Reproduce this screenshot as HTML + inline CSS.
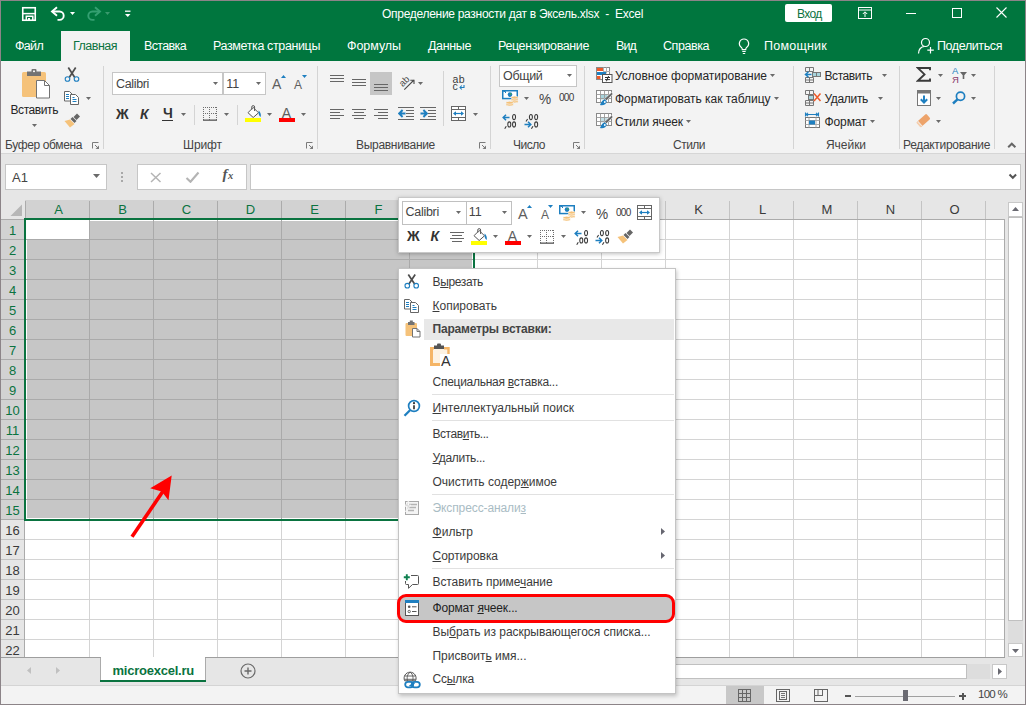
<!DOCTYPE html><html><head><meta charset="utf-8"><title>Excel</title><style>
html,body{margin:0;padding:0;}
body{width:1026px;height:705px;overflow:hidden;position:relative;background:#fff;font-family:"Liberation Sans",sans-serif;}
.b{position:absolute;display:block;}
.t{position:absolute;white-space:nowrap;line-height:1;}
u{text-decoration:underline;text-underline-offset:1px;text-decoration-thickness:1px;}
</style></head><body>
<div class="b" style="left:0px;top:0px;width:1026px;height:61px;background:#00763e;"></div>
<div class="b" style="left:0px;top:61px;width:1026px;height:92px;background:#f3f3f3;"></div>
<div class="b" style="left:0px;top:153px;width:1026px;height:1px;background:#d6d6d6;"></div>
<div class="b" style="left:0px;top:154px;width:1026px;height:46px;background:#e6e6e6;"></div>
<div class="b" style="left:0px;top:200px;width:1026px;height:460px;background:#e6e6e6;"></div>
<div class="b" style="left:0px;top:0px;width:1026px;height:1px;background:#8c8488;"></div>
<div class="b" style="left:0px;top:0px;width:1px;height:705px;background:#8c8488;"></div>
<div class="b" style="left:1025px;top:0px;width:1px;height:705px;background:#8c8488;"></div>
<div class="b" style="left:0px;top:704px;width:1026px;height:1px;background:#8c8488;"></div>
<span class="t" id="t0" style="left:382px;top:8.00px;font-size:12px;color:#fff;letter-spacing:-0.290px;">Определение разности дат в Эксель.xlsx&nbsp; -&nbsp; Excel</span>
<svg class="b" style="left:21px;top:6px" width="16" height="16" viewBox="0 0 16 16"><rect x="1.750" y="1.750" width="12.500" height="12.500" fill="none" stroke="#fff" stroke-width="1.600"/><path d="M2 7.600h12" stroke="#fff" stroke-width="1.500"/><path d="M5.300 14V10.300h6.500V14" fill="none" stroke="#fff" stroke-width="1.500"/><rect x="7" y="12" width="2" height="2.500" fill="#fff"/></svg>
<svg class="b" style="left:50px;top:6px" width="17" height="15" viewBox="0 0 17 15"><path d="M7 1.200L2 5.500l5 4.300" fill="none" stroke="#fff" stroke-width="1.900"/><path d="M2.500 5.500h7a4.200 4.200 0 0 1 0 8.400H7.500" fill="none" stroke="#fff" stroke-width="1.900"/></svg>
<svg class="b" style="left:70.0px;top:12.0px" width="5" height="3" viewBox="0 0 5 3"><path d="M0 0H5L2.5 3Z" fill="#fff"/></svg>
<svg class="b" style="left:85px;top:6px" width="17" height="15" viewBox="0 0 17 15"><path d="M10 1.200l5 4.300-5 4.300" fill="none" stroke="#35a072" stroke-width="1.900"/><path d="M14.500 5.500h-7a4.200 4.200 0 0 0 0 8.400H9.500" fill="none" stroke="#35a072" stroke-width="1.900"/></svg>
<svg class="b" style="left:105.0px;top:12.0px" width="5" height="3" viewBox="0 0 5 3"><path d="M0 0H5L2.5 3Z" fill="#3a9a6e"/></svg>
<svg class="b" style="left:125px;top:10px" width="6" height="8" viewBox="0 0 6 8"><path d="M0 1.200h5.500" stroke="#fff" stroke-width="1.300"/><path d="M0 4h5.500L2.750 7z" fill="#fff"/></svg>
<div class="b" style="left:785px;top:4px;width:47px;height:18px;background:#fff;border-radius:2px;"></div>
<span class="t" id="t1" style="left:797px;top:8.00px;font-size:12px;color:#0a7340;letter-spacing:-0.664px;">Вход</span>
<svg class="b" style="left:858px;top:7px" width="15" height="13" viewBox="0 0 15 13"><rect x="0.5" y="0.5" width="13" height="11" fill="none" stroke="#fff" stroke-width="1"/><path d="M0.5 3h13" stroke="#fff"/><path d="M7 10V5M4.8 7L7 4.8 9.2 7" fill="none" stroke="#fff" stroke-width="1"/></svg>
<div class="b" style="left:906px;top:13px;width:10px;height:1px;background:#fff;"></div>
<div class="b" style="left:952px;top:8px;width:10px;height:10px;background:transparent;border:1px solid #fff;box-sizing:border-box;"></div>
<svg class="b" style="left:996px;top:7px" width="12" height="12" viewBox="0 0 12 12"><path d="M0.5 0.5l10 10M10.5 0.5l-10 10" stroke="#fff" stroke-width="1.1"/></svg>
<div class="b" style="left:61px;top:31px;width:69px;height:30px;background:#f3f3f3;"></div>
<span class="t" id="t2" style="left:15px;top:39.75px;font-size:12.5px;color:#fff;letter-spacing:-0.684px;">Файл</span>
<span class="t" id="t3" style="left:73px;top:39.75px;font-size:12.5px;color:#0a7340;letter-spacing:-0.511px;">Главная</span>
<span class="t" id="t4" style="left:144px;top:39.75px;font-size:12.5px;color:#fff;letter-spacing:-0.638px;">Вставка</span>
<span class="t" id="t5" style="left:213px;top:39.75px;font-size:12.5px;color:#fff;letter-spacing:-0.377px;">Разметка страницы</span>
<span class="t" id="t6" style="left:347px;top:39.75px;font-size:12.5px;color:#fff;letter-spacing:-0.058px;">Формулы</span>
<span class="t" id="t7" style="left:428px;top:39.75px;font-size:12.5px;color:#fff;letter-spacing:-0.362px;">Данные</span>
<span class="t" id="t8" style="left:498px;top:39.75px;font-size:12.5px;color:#fff;letter-spacing:-0.395px;">Рецензирование</span>
<span class="t" id="t9" style="left:616px;top:39.75px;font-size:12.5px;color:#fff;letter-spacing:-0.875px;">Вид</span>
<span class="t" id="t10" style="left:663px;top:39.75px;font-size:12.5px;color:#fff;letter-spacing:-0.435px;">Справка</span>
<span class="t" id="t11" style="left:764px;top:39.75px;font-size:12.5px;color:#fff;letter-spacing:0.234px;">Помощник</span>
<span class="t" id="t12" style="left:937px;top:39.75px;font-size:12.5px;color:#fff;letter-spacing:-0.403px;">Поделиться</span>
<svg class="b" style="left:738px;top:38px" width="12" height="17" viewBox="0 0 12 17"><path d="M6 1a4.6 4.6 0 0 0-2.6 8.4c.6.6.9 1.3.9 2.3h3.4c0-1 .3-1.700.9-2.300A4.600 4.600 0 0 0 6 1z" fill="none" stroke="#fff" stroke-width="1.2"/><path d="M4.300 13.500h3.400M4.800 15.500h2.400" stroke="#fff" stroke-width="1.100"/></svg>
<svg class="b" style="left:917px;top:37px" width="18" height="18" viewBox="0 0 18 18"><circle cx="8.500" cy="5.500" r="4" fill="none" stroke="#fff" stroke-width="1.200"/><path d="M1.500 16.500c0-4 2.500-7 6-7" fill="none" stroke="#fff" stroke-width="1.200"/><path d="M13.500 10v6.500M10.300 13.200h6.500" stroke="#fff" stroke-width="1.200"/></svg>
<div class="b" style="left:103px;top:66px;width:1px;height:83px;background:#d4d4d4;"></div>
<div class="b" style="left:317px;top:66px;width:1px;height:83px;background:#d4d4d4;"></div>
<div class="b" style="left:490px;top:66px;width:1px;height:83px;background:#d4d4d4;"></div>
<div class="b" style="left:584px;top:66px;width:1px;height:83px;background:#d4d4d4;"></div>
<div class="b" style="left:793px;top:66px;width:1px;height:83px;background:#d4d4d4;"></div>
<div class="b" style="left:899px;top:66px;width:1px;height:83px;background:#d4d4d4;"></div>
<div class="b" style="left:994px;top:66px;width:1px;height:83px;background:#d4d4d4;"></div>
<span class="t" id="t13" style="left:5px;top:139.00px;font-size:12px;color:#444;letter-spacing:-0.379px;">Буфер обмена</span>
<span class="t" id="t14" style="left:183px;top:139.00px;font-size:12px;color:#444;letter-spacing:-0.097px;">Шрифт</span>
<span class="t" id="t15" style="left:356px;top:139.00px;font-size:12px;color:#444;letter-spacing:-0.301px;">Выравнивание</span>
<span class="t" id="t16" style="left:513px;top:139.00px;font-size:12px;color:#444;letter-spacing:-0.503px;">Число</span>
<span class="t" id="t17" style="left:673px;top:139.00px;font-size:12px;color:#444;letter-spacing:-0.516px;">Стили</span>
<span class="t" id="t18" style="left:826px;top:139.00px;font-size:12px;color:#444;letter-spacing:-0.042px;">Ячейки</span>
<span class="t" id="t19" style="left:903px;top:139.00px;font-size:12px;color:#444;letter-spacing:-0.316px;">Редактирование</span>
<div class="b" style="left:5px;top:164px;width:102px;height:26px;background:#fff;border:1px solid #c6c6c6;box-sizing:border-box;"></div>
<span class="t" id="t20" style="left:12px;top:171.00px;font-size:13px;color:#444;letter-spacing:0.047px;">A1</span>
<svg class="b" style="left:93.0px;top:174.0px" width="7" height="4" viewBox="0 0 7 4"><path d="M0 0H7L3.5 4Z" fill="#6a6a6a"/></svg>
<div class="b" style="left:121px;top:172px;width:2px;height:2px;background:#a8a8a8;"></div>
<div class="b" style="left:121px;top:176px;width:2px;height:2px;background:#a8a8a8;"></div>
<div class="b" style="left:121px;top:180px;width:2px;height:2px;background:#a8a8a8;"></div>
<div class="b" style="left:137px;top:164px;width:110px;height:26px;background:#fff;border:1px solid #c6c6c6;box-sizing:border-box;"></div>
<svg class="b" style="left:150px;top:172px" width="12" height="11" viewBox="0 0 12 11"><path d="M1 1l9.500 9M10.500 1L1 10" stroke="#b4b4b4" stroke-width="1.500"/></svg>
<svg class="b" style="left:185px;top:171px" width="15" height="12" viewBox="0 0 15 12"><path d="M1.500 7l4 3.800L13.500 1.500" fill="none" stroke="#b4b4b4" stroke-width="2.100"/></svg>
<span class="t" id="t21" style="left:222.5px;top:167.00px;font-size:15px;color:#555;font-style:italic;font-family:'Liberation Serif',serif;font-weight:bold;">f</span>
<span class="t" id="t22" style="left:228px;top:170.75px;font-size:10.5px;color:#555;font-style:italic;font-family:'Liberation Serif',serif;font-weight:bold;">x</span>
<div class="b" style="left:250px;top:164px;width:771px;height:26px;background:#fff;border:1px solid #c6c6c6;box-sizing:border-box;"></div>
<svg class="b" style="left:1008px;top:173px" width="10" height="7" viewBox="0 0 10 7"><path d="M1.500 1.500l3.300 3.300L8.100 1.500" fill="none" stroke="#555" stroke-width="2"/></svg>
<div class="b" style="left:25px;top:219px;width:980px;height:438px;background:#fff;"></div>
<div class="b" style="left:26px;top:220px;width:447px;height:299px;background:#fff;"></div>
<div class="b" style="left:27px;top:221px;width:445px;height:297px;background:#c6c6c6;"></div>
<div class="b" style="left:26px;top:220px;width:63px;height:19px;background:#fff;"></div>
<div class="b" style="left:89px;top:219px;width:1px;height:300px;background:#aaaaaa;"></div>
<div class="b" style="left:89px;top:519px;width:1px;height:138px;background:#d4d4d4;"></div>
<div class="b" style="left:153px;top:219px;width:1px;height:300px;background:#aaaaaa;"></div>
<div class="b" style="left:153px;top:519px;width:1px;height:138px;background:#d4d4d4;"></div>
<div class="b" style="left:217px;top:219px;width:1px;height:300px;background:#aaaaaa;"></div>
<div class="b" style="left:217px;top:519px;width:1px;height:138px;background:#d4d4d4;"></div>
<div class="b" style="left:281px;top:219px;width:1px;height:300px;background:#aaaaaa;"></div>
<div class="b" style="left:281px;top:519px;width:1px;height:138px;background:#d4d4d4;"></div>
<div class="b" style="left:345px;top:219px;width:1px;height:300px;background:#aaaaaa;"></div>
<div class="b" style="left:345px;top:519px;width:1px;height:138px;background:#d4d4d4;"></div>
<div class="b" style="left:409px;top:219px;width:1px;height:300px;background:#aaaaaa;"></div>
<div class="b" style="left:409px;top:519px;width:1px;height:138px;background:#d4d4d4;"></div>
<div class="b" style="left:473px;top:219px;width:1px;height:438px;background:#d4d4d4;"></div>
<div class="b" style="left:537px;top:219px;width:1px;height:438px;background:#d4d4d4;"></div>
<div class="b" style="left:601px;top:219px;width:1px;height:438px;background:#d4d4d4;"></div>
<div class="b" style="left:665px;top:219px;width:1px;height:438px;background:#d4d4d4;"></div>
<div class="b" style="left:729px;top:219px;width:1px;height:438px;background:#d4d4d4;"></div>
<div class="b" style="left:793px;top:219px;width:1px;height:438px;background:#d4d4d4;"></div>
<div class="b" style="left:857px;top:219px;width:1px;height:438px;background:#d4d4d4;"></div>
<div class="b" style="left:921px;top:219px;width:1px;height:438px;background:#d4d4d4;"></div>
<div class="b" style="left:985px;top:219px;width:1px;height:438px;background:#d4d4d4;"></div>
<div class="b" style="left:25px;top:239px;width:448px;height:1px;background:#aaaaaa;"></div>
<div class="b" style="left:473px;top:239px;width:532px;height:1px;background:#d4d4d4;"></div>
<div class="b" style="left:25px;top:259px;width:448px;height:1px;background:#aaaaaa;"></div>
<div class="b" style="left:473px;top:259px;width:532px;height:1px;background:#d4d4d4;"></div>
<div class="b" style="left:25px;top:279px;width:448px;height:1px;background:#aaaaaa;"></div>
<div class="b" style="left:473px;top:279px;width:532px;height:1px;background:#d4d4d4;"></div>
<div class="b" style="left:25px;top:299px;width:448px;height:1px;background:#aaaaaa;"></div>
<div class="b" style="left:473px;top:299px;width:532px;height:1px;background:#d4d4d4;"></div>
<div class="b" style="left:25px;top:319px;width:448px;height:1px;background:#aaaaaa;"></div>
<div class="b" style="left:473px;top:319px;width:532px;height:1px;background:#d4d4d4;"></div>
<div class="b" style="left:25px;top:339px;width:448px;height:1px;background:#aaaaaa;"></div>
<div class="b" style="left:473px;top:339px;width:532px;height:1px;background:#d4d4d4;"></div>
<div class="b" style="left:25px;top:359px;width:448px;height:1px;background:#aaaaaa;"></div>
<div class="b" style="left:473px;top:359px;width:532px;height:1px;background:#d4d4d4;"></div>
<div class="b" style="left:25px;top:379px;width:448px;height:1px;background:#aaaaaa;"></div>
<div class="b" style="left:473px;top:379px;width:532px;height:1px;background:#d4d4d4;"></div>
<div class="b" style="left:25px;top:399px;width:448px;height:1px;background:#aaaaaa;"></div>
<div class="b" style="left:473px;top:399px;width:532px;height:1px;background:#d4d4d4;"></div>
<div class="b" style="left:25px;top:419px;width:448px;height:1px;background:#aaaaaa;"></div>
<div class="b" style="left:473px;top:419px;width:532px;height:1px;background:#d4d4d4;"></div>
<div class="b" style="left:25px;top:439px;width:448px;height:1px;background:#aaaaaa;"></div>
<div class="b" style="left:473px;top:439px;width:532px;height:1px;background:#d4d4d4;"></div>
<div class="b" style="left:25px;top:459px;width:448px;height:1px;background:#aaaaaa;"></div>
<div class="b" style="left:473px;top:459px;width:532px;height:1px;background:#d4d4d4;"></div>
<div class="b" style="left:25px;top:479px;width:448px;height:1px;background:#aaaaaa;"></div>
<div class="b" style="left:473px;top:479px;width:532px;height:1px;background:#d4d4d4;"></div>
<div class="b" style="left:25px;top:499px;width:448px;height:1px;background:#aaaaaa;"></div>
<div class="b" style="left:473px;top:499px;width:532px;height:1px;background:#d4d4d4;"></div>
<div class="b" style="left:25px;top:519px;width:980px;height:1px;background:#d4d4d4;"></div>
<div class="b" style="left:25px;top:539px;width:980px;height:1px;background:#d4d4d4;"></div>
<div class="b" style="left:25px;top:559px;width:980px;height:1px;background:#d4d4d4;"></div>
<div class="b" style="left:25px;top:579px;width:980px;height:1px;background:#d4d4d4;"></div>
<div class="b" style="left:25px;top:599px;width:980px;height:1px;background:#d4d4d4;"></div>
<div class="b" style="left:25px;top:619px;width:980px;height:1px;background:#d4d4d4;"></div>
<div class="b" style="left:25px;top:639px;width:980px;height:1px;background:#d4d4d4;"></div>
<div class="b" style="left:1px;top:200px;width:1004px;height:19px;background:#e6e6e6;"></div>
<div class="b" style="left:25px;top:200px;width:448px;height:18px;background:#d2d2d2;"></div>
<div class="b" style="left:1px;top:219px;width:24px;height:438px;background:#e6e6e6;"></div>
<div class="b" style="left:1px;top:219px;width:24px;height:300px;background:#d2d2d2;"></div>
<span class="t" id="t23" style="left:53.5px;top:203.00px;font-size:13px;color:#0a7340;width:10px;text-align:center;">A</span>
<div class="b" style="left:89px;top:201px;width:1px;height:18px;background:#ababab;"></div>
<span class="t" id="t24" style="left:117.5px;top:203.00px;font-size:13px;color:#0a7340;width:10px;text-align:center;">B</span>
<div class="b" style="left:153px;top:201px;width:1px;height:18px;background:#ababab;"></div>
<span class="t" id="t25" style="left:181.5px;top:203.00px;font-size:13px;color:#0a7340;width:10px;text-align:center;">C</span>
<div class="b" style="left:217px;top:201px;width:1px;height:18px;background:#ababab;"></div>
<span class="t" id="t26" style="left:245.5px;top:203.00px;font-size:13px;color:#0a7340;width:10px;text-align:center;">D</span>
<div class="b" style="left:281px;top:201px;width:1px;height:18px;background:#ababab;"></div>
<span class="t" id="t27" style="left:309.5px;top:203.00px;font-size:13px;color:#0a7340;width:10px;text-align:center;">E</span>
<div class="b" style="left:345px;top:201px;width:1px;height:18px;background:#ababab;"></div>
<span class="t" id="t28" style="left:373.5px;top:203.00px;font-size:13px;color:#0a7340;width:10px;text-align:center;">F</span>
<div class="b" style="left:409px;top:201px;width:1px;height:18px;background:#ababab;"></div>
<span class="t" id="t29" style="left:437.5px;top:203.00px;font-size:13px;color:#0a7340;width:10px;text-align:center;">G</span>
<div class="b" style="left:473px;top:201px;width:1px;height:18px;background:#ababab;"></div>
<span class="t" id="t30" style="left:501.5px;top:203.00px;font-size:13px;color:#3a3a3a;width:10px;text-align:center;">H</span>
<div class="b" style="left:537px;top:201px;width:1px;height:18px;background:#c3c3c3;"></div>
<span class="t" id="t31" style="left:565.5px;top:203.00px;font-size:13px;color:#3a3a3a;width:10px;text-align:center;">I</span>
<div class="b" style="left:601px;top:201px;width:1px;height:18px;background:#c3c3c3;"></div>
<span class="t" id="t32" style="left:629.5px;top:203.00px;font-size:13px;color:#3a3a3a;width:10px;text-align:center;">J</span>
<div class="b" style="left:665px;top:201px;width:1px;height:18px;background:#c3c3c3;"></div>
<span class="t" id="t33" style="left:693.5px;top:203.00px;font-size:13px;color:#3a3a3a;width:10px;text-align:center;">K</span>
<div class="b" style="left:729px;top:201px;width:1px;height:18px;background:#c3c3c3;"></div>
<span class="t" id="t34" style="left:757.5px;top:203.00px;font-size:13px;color:#3a3a3a;width:10px;text-align:center;">L</span>
<div class="b" style="left:793px;top:201px;width:1px;height:18px;background:#c3c3c3;"></div>
<span class="t" id="t35" style="left:821.5px;top:203.00px;font-size:13px;color:#3a3a3a;width:10px;text-align:center;">M</span>
<div class="b" style="left:857px;top:201px;width:1px;height:18px;background:#c3c3c3;"></div>
<span class="t" id="t36" style="left:885.5px;top:203.00px;font-size:13px;color:#3a3a3a;width:10px;text-align:center;">N</span>
<div class="b" style="left:921px;top:201px;width:1px;height:18px;background:#c3c3c3;"></div>
<span class="t" id="t37" style="left:949.5px;top:203.00px;font-size:13px;color:#3a3a3a;width:10px;text-align:center;">O</span>
<div class="b" style="left:985px;top:201px;width:1px;height:18px;background:#c3c3c3;"></div>
<div class="b" style="left:25px;top:201px;width:1px;height:18px;background:#ababab;"></div>
<div class="b" style="left:1px;top:219px;width:1004px;height:1px;background:#ababab;"></div>
<span class="t" id="t38" style="left:3.5px;top:224.00px;font-size:13px;color:#0a7340;width:18px;text-align:center;">1</span>
<div class="b" style="left:1px;top:239px;width:24px;height:1px;background:#ababab;"></div>
<span class="t" id="t39" style="left:3.5px;top:244.00px;font-size:13px;color:#0a7340;width:18px;text-align:center;">2</span>
<div class="b" style="left:1px;top:259px;width:24px;height:1px;background:#ababab;"></div>
<span class="t" id="t40" style="left:3.5px;top:264.00px;font-size:13px;color:#0a7340;width:18px;text-align:center;">3</span>
<div class="b" style="left:1px;top:279px;width:24px;height:1px;background:#ababab;"></div>
<span class="t" id="t41" style="left:3.5px;top:284.00px;font-size:13px;color:#0a7340;width:18px;text-align:center;">4</span>
<div class="b" style="left:1px;top:299px;width:24px;height:1px;background:#ababab;"></div>
<span class="t" id="t42" style="left:3.5px;top:304.00px;font-size:13px;color:#0a7340;width:18px;text-align:center;">5</span>
<div class="b" style="left:1px;top:319px;width:24px;height:1px;background:#ababab;"></div>
<span class="t" id="t43" style="left:3.5px;top:324.00px;font-size:13px;color:#0a7340;width:18px;text-align:center;">6</span>
<div class="b" style="left:1px;top:339px;width:24px;height:1px;background:#ababab;"></div>
<span class="t" id="t44" style="left:3.5px;top:344.00px;font-size:13px;color:#0a7340;width:18px;text-align:center;">7</span>
<div class="b" style="left:1px;top:359px;width:24px;height:1px;background:#ababab;"></div>
<span class="t" id="t45" style="left:3.5px;top:364.00px;font-size:13px;color:#0a7340;width:18px;text-align:center;">8</span>
<div class="b" style="left:1px;top:379px;width:24px;height:1px;background:#ababab;"></div>
<span class="t" id="t46" style="left:3.5px;top:384.00px;font-size:13px;color:#0a7340;width:18px;text-align:center;">9</span>
<div class="b" style="left:1px;top:399px;width:24px;height:1px;background:#ababab;"></div>
<span class="t" id="t47" style="left:3.5px;top:404.00px;font-size:13px;color:#0a7340;width:18px;text-align:center;">10</span>
<div class="b" style="left:1px;top:419px;width:24px;height:1px;background:#ababab;"></div>
<span class="t" id="t48" style="left:3.5px;top:424.00px;font-size:13px;color:#0a7340;width:18px;text-align:center;">11</span>
<div class="b" style="left:1px;top:439px;width:24px;height:1px;background:#ababab;"></div>
<span class="t" id="t49" style="left:3.5px;top:444.00px;font-size:13px;color:#0a7340;width:18px;text-align:center;">12</span>
<div class="b" style="left:1px;top:459px;width:24px;height:1px;background:#ababab;"></div>
<span class="t" id="t50" style="left:3.5px;top:464.00px;font-size:13px;color:#0a7340;width:18px;text-align:center;">13</span>
<div class="b" style="left:1px;top:479px;width:24px;height:1px;background:#ababab;"></div>
<span class="t" id="t51" style="left:3.5px;top:484.00px;font-size:13px;color:#0a7340;width:18px;text-align:center;">14</span>
<div class="b" style="left:1px;top:499px;width:24px;height:1px;background:#ababab;"></div>
<span class="t" id="t52" style="left:3.5px;top:504.00px;font-size:13px;color:#0a7340;width:18px;text-align:center;">15</span>
<div class="b" style="left:1px;top:519px;width:24px;height:1px;background:#ababab;"></div>
<span class="t" id="t53" style="left:3.5px;top:524.00px;font-size:13px;color:#3a3a3a;width:18px;text-align:center;">16</span>
<div class="b" style="left:1px;top:539px;width:24px;height:1px;background:#c3c3c3;"></div>
<span class="t" id="t54" style="left:3.5px;top:544.00px;font-size:13px;color:#3a3a3a;width:18px;text-align:center;">17</span>
<div class="b" style="left:1px;top:559px;width:24px;height:1px;background:#c3c3c3;"></div>
<span class="t" id="t55" style="left:3.5px;top:564.00px;font-size:13px;color:#3a3a3a;width:18px;text-align:center;">18</span>
<div class="b" style="left:1px;top:579px;width:24px;height:1px;background:#c3c3c3;"></div>
<span class="t" id="t56" style="left:3.5px;top:584.00px;font-size:13px;color:#3a3a3a;width:18px;text-align:center;">19</span>
<div class="b" style="left:1px;top:599px;width:24px;height:1px;background:#c3c3c3;"></div>
<span class="t" id="t57" style="left:3.5px;top:604.00px;font-size:13px;color:#3a3a3a;width:18px;text-align:center;">20</span>
<div class="b" style="left:1px;top:619px;width:24px;height:1px;background:#c3c3c3;"></div>
<span class="t" id="t58" style="left:3.5px;top:624.00px;font-size:13px;color:#3a3a3a;width:18px;text-align:center;">21</span>
<div class="b" style="left:1px;top:639px;width:24px;height:1px;background:#c3c3c3;"></div>
<span class="t" id="t59" style="left:3.5px;top:644.00px;font-size:13px;color:#3a3a3a;width:18px;text-align:center;">22</span>
<div class="b" style="left:1px;top:659px;width:24px;height:1px;background:#c3c3c3;"></div>
<div class="b" style="left:24px;top:219px;width:1px;height:438px;background:#ababab;"></div>
<svg class="b" style="left:10px;top:204px" width="13" height="13" viewBox="0 0 13 13"><path d="M12 0.500V12H0.500z" fill="#b7b7b7"/></svg>
<div class="b" style="left:24px;top:218px;width:450px;height:2px;background:#0a7340;"></div>
<div class="b" style="left:24px;top:218px;width:2px;height:303px;background:#0a7340;"></div>
<div class="b" style="left:24px;top:519px;width:450px;height:2px;background:#0a7340;"></div>
<div class="b" style="left:473px;top:218px;width:2px;height:303px;background:#0a7340;"></div>
<div class="b" style="left:1004px;top:219px;width:1px;height:438px;background:#ababab;"></div>
<div class="b" style="left:1005px;top:200px;width:20px;height:459px;background:#e6e6e6;"></div>
<div class="b" style="left:1008px;top:202px;width:15px;height:15px;background:#fff;border:1px solid #c8c8c8;box-sizing:border-box;"></div>
<svg class="b" style="left:1012px;top:207px" width="7" height="4" viewBox="0 0 7 4"><path d="M0 4h7L3.500 0z" fill="#6a6a72"/></svg>
<div class="b" style="left:1008px;top:217px;width:15px;height:404px;background:#fff;border:1px solid #c0c0c0;box-sizing:border-box;"></div>
<div class="b" style="left:1008px;top:621px;width:15px;height:22px;background:#dddddd;"></div>
<div class="b" style="left:1008px;top:643px;width:15px;height:14px;background:#fff;border:1px solid #c8c8c8;box-sizing:border-box;"></div>
<svg class="b" style="left:1012px;top:649px" width="7" height="4" viewBox="0 0 7 4"><path d="M0 0h7L3.500 4z" fill="#6a6a72"/></svg>
<div class="b" style="left:1px;top:657px;width:1004px;height:1px;background:#9e9e9e;"></div>
<div class="b" style="left:1px;top:658px;width:1024px;height:27px;background:#e6e6e6;"></div>
<div class="b" style="left:101px;top:657px;width:104px;height:23px;background:#fff;"></div>
<div class="b" style="left:100px;top:658px;width:1px;height:24px;background:#ababab;"></div>
<div class="b" style="left:205px;top:658px;width:1px;height:24px;background:#ababab;"></div>
<div class="b" style="left:100px;top:680px;width:106px;height:2px;background:#0a7340;"></div>
<span class="t" id="t60" style="left:112.5px;top:664.00px;font-size:13px;color:#0a7340;font-weight:bold;letter-spacing:-0.234px;">microexcel.ru</span>
<svg class="b" style="left:27px;top:667px" width="4" height="7" viewBox="0 0 4 7"><path d="M4 0v7L0 3.500z" fill="#c0c0c0"/></svg>
<svg class="b" style="left:56px;top:667px" width="4" height="7" viewBox="0 0 4 7"><path d="M0 0v7L4 3.500z" fill="#c0c0c0"/></svg>
<svg class="b" style="left:240px;top:663px" width="16" height="16" viewBox="0 0 16 16"><circle cx="8" cy="8" r="7" fill="none" stroke="#6a6a6a" stroke-width="1.200"/><path d="M8 4.500v7M4.500 8h7" stroke="#6a6a6a" stroke-width="1.400"/></svg>
<div class="b" style="left:655px;top:664px;width:312px;height:15px;background:#fff;border:1px solid #c0c0c0;box-sizing:border-box;"></div>
<div class="b" style="left:967px;top:664px;width:23px;height:15px;background:#dddddd;"></div>
<div class="b" style="left:992px;top:664px;width:15px;height:15px;background:#fff;border:1px solid #c8c8c8;box-sizing:border-box;"></div>
<svg class="b" style="left:998px;top:668px" width="4" height="7" viewBox="0 0 4 7"><path d="M0 0v7L4 3.500z" fill="#6a6a72"/></svg>
<div class="b" style="left:1px;top:685px;width:1024px;height:1px;background:#d4d4d4;"></div>
<div class="b" style="left:1px;top:686px;width:1024px;height:18px;background:#f3f3f3;"></div>
<div class="b" style="left:726px;top:686px;width:38px;height:18px;background:#c8c8c8;"></div>
<svg class="b" style="left:738px;top:689px" width="13" height="13" viewBox="0 0 13 13"><rect x="0.500" y="0.500" width="12" height="12" fill="none" stroke="#666"/><path d="M4.500 0v13M8.500 0v13M0 4.500h13M0 8.500h13" stroke="#666"/></svg>
<svg class="b" style="left:776px;top:689px" width="14" height="13" viewBox="0 0 14 13"><rect x="0.500" y="0.500" width="13" height="12" fill="none" stroke="#666"/><rect x="3.500" y="2.500" width="7" height="8" fill="none" stroke="#666"/><path d="M5 4.500h4M5 6.500h4M5 8.500h4" stroke="#666" stroke-width="0.900"/></svg>
<svg class="b" style="left:814px;top:689px" width="14" height="13" viewBox="0 0 14 13"><rect x="0.500" y="0.500" width="13" height="12" fill="none" stroke="#666"/><path d="M4 0.500v6.500M8.500 0.500v6.500M0.500 6.500h8" stroke="#666" fill="none"/></svg>
<div class="b" style="left:845px;top:695px;width:6px;height:2px;background:#555;"></div>
<div class="b" style="left:855px;top:696px;width:100px;height:1px;background:#a0a0a0;"></div>
<div class="b" style="left:903px;top:690px;width:5px;height:11px;background:#6a6a72;"></div>
<div class="b" style="left:959px;top:695px;width:7px;height:2px;background:#555;"></div>
<div class="b" style="left:961.5px;top:692.5px;width:2px;height:7px;background:#555;"></div>
<span class="t" id="t61" style="left:978px;top:689.25px;font-size:11.5px;color:#444;letter-spacing:-0.722px;">100 %</span>
<svg class="b" style="left:92px;top:142px" width="7" height="7" viewBox="0 0 7 7"><path d="M0.500 6.500V0.500H6.500" fill="none" stroke="#7a7a7a" stroke-width="1"/><path d="M3 3l3 3" stroke="#7a7a7a" stroke-width="1"/><path d="M7 3.500V7H3.500z" fill="#7a7a7a"/></svg>
<svg class="b" style="left:306px;top:142px" width="7" height="7" viewBox="0 0 7 7"><path d="M0.500 6.500V0.500H6.500" fill="none" stroke="#7a7a7a" stroke-width="1"/><path d="M3 3l3 3" stroke="#7a7a7a" stroke-width="1"/><path d="M7 3.500V7H3.500z" fill="#7a7a7a"/></svg>
<svg class="b" style="left:479px;top:142px" width="7" height="7" viewBox="0 0 7 7"><path d="M0.500 6.500V0.500H6.500" fill="none" stroke="#7a7a7a" stroke-width="1"/><path d="M3 3l3 3" stroke="#7a7a7a" stroke-width="1"/><path d="M7 3.500V7H3.500z" fill="#7a7a7a"/></svg>
<svg class="b" style="left:573px;top:142px" width="7" height="7" viewBox="0 0 7 7"><path d="M0.500 6.500V0.500H6.500" fill="none" stroke="#7a7a7a" stroke-width="1"/><path d="M3 3l3 3" stroke="#7a7a7a" stroke-width="1"/><path d="M7 3.500V7H3.500z" fill="#7a7a7a"/></svg>
<svg class="b" style="left:22px;top:69px" width="29" height="30" viewBox="0 0 29 30"><rect x="0" y="3" width="24" height="25" rx="1.500" fill="#f5c27a"/><rect x="5" y="2.500" width="14" height="4.500" fill="#737373"/><rect x="9.500" y="0" width="5" height="4" rx="1" fill="#737373"/><rect x="11" y="1.500" width="2" height="1.600" fill="#f3f3f3"/><path d="M14.500 11.500h8l5 5v12.500h-13z" fill="#fff" stroke="#737373" stroke-width="1"/><path d="M22.500 11.500v5h5" fill="none" stroke="#737373" stroke-width="1"/></svg>
<span class="t" id="t62" style="left:10.5px;top:104.00px;font-size:12px;color:#262626;letter-spacing:-0.422px;">Вставить</span>
<svg class="b" style="left:32.0px;top:124.0px" width="5" height="3" viewBox="0 0 5 3"><path d="M0 0H5L2.5 3Z" fill="#6a6a6a"/></svg>
<svg class="b" style="left:64px;top:67px" width="16" height="16" viewBox="0 0 16 16"><path d="M4.300 0.500L10.600 10.300M11.700 0.500L5.400 10.300" stroke="#4d4d4d" stroke-width="1.700" fill="none"/><circle cx="3.500" cy="12" r="2.300" fill="none" stroke="#1e7fc0" stroke-width="1.100"/><circle cx="12.500" cy="12" r="2.300" fill="none" stroke="#1e7fc0" stroke-width="1.100"/></svg>
<svg class="b" style="left:64px;top:91px" width="16" height="14" viewBox="0 0 16 14"><path d="M0.500 0.500h5l2.500 2.500v7h-7.500z" fill="#fff" stroke="#666"/><path d="M6.500 3.500h5l3 3v7h-8z" fill="#fff" stroke="#666"/><path d="M2 3.500h3M2 5.500h3M2 7.500h3M8.500 8.500h4M8.500 10.500h4M8.500 6.500h2" stroke="#1e7fc0" stroke-width="1"/></svg>
<svg class="b" style="left:86.0px;top:97.0px" width="5" height="3" viewBox="0 0 5 3"><path d="M0 0H5L2.5 3Z" fill="#6a6a6a"/></svg>
<svg class="b" style="left:64px;top:113px" width="17" height="15" viewBox="0 0 17 15"><path d="M13 0.500l3 3-3.500 3.500-3-3z" fill="#666"/><path d="M8.500 4l4 4-2 2-4-4z" fill="#666"/><path d="M6 6.500l4.500 4.500L6 14.500 0.500 8z" fill="#f5c27a"/></svg>
<div class="b" style="left:112px;top:72px;width:111px;height:23px;background:#fff;border:1px solid #c6c6c6;box-sizing:border-box;"></div>
<div class="b" style="left:223px;top:72px;width:43px;height:23px;background:#fff;border:1px solid #c6c6c6;box-sizing:border-box;"></div>
<span class="t" id="t63" style="left:116px;top:77.75px;font-size:12.5px;color:#444;letter-spacing:-0.348px;">Calibri</span>
<span class="t" id="t64" style="left:226.2px;top:77.75px;font-size:12.5px;color:#444;">11</span>
<svg class="b" style="left:212.5px;top:82.0px" width="5" height="3" viewBox="0 0 5 3"><path d="M0 0H5L2.5 3Z" fill="#6a6a6a"/></svg>
<svg class="b" style="left:256.0px;top:82.0px" width="5" height="3" viewBox="0 0 5 3"><path d="M0 0H5L2.5 3Z" fill="#6a6a6a"/></svg>
<span class="t" id="t65" style="left:272px;top:77.00px;font-size:14px;color:#5e5e5e;">A</span>
<svg class="b" style="left:281px;top:75px" width="5" height="3" viewBox="0 0 5 3"><path d="M0 3h5L2.500 0z" fill="#1e7fc0"/></svg>
<span class="t" id="t66" style="left:294px;top:79.00px;font-size:12px;color:#5e5e5e;">A</span>
<svg class="b" style="left:302px;top:75px" width="5" height="3" viewBox="0 0 5 3"><path d="M0 0h5L2.500 3z" fill="#1e7fc0"/></svg>
<span class="t" id="t67" style="left:116px;top:107.00px;font-size:14px;color:#333;font-weight:bold;letter-spacing:0.344px;">Ж</span>
<span class="t" id="t68" style="left:140px;top:107.00px;font-size:14px;color:#333;font-weight:bold;font-style:italic;letter-spacing:0.391px;">К</span>
<span class="t" id="t69" style="left:163px;top:106.00px;font-size:14px;color:#333;font-weight:bold;letter-spacing:-0.844px;">Ч</span>
<div class="b" style="left:162px;top:120px;width:11px;height:1px;background:#333;"></div>
<svg class="b" style="left:180.5px;top:113.0px" width="5" height="3" viewBox="0 0 5 3"><path d="M0 0H5L2.5 3Z" fill="#6a6a6a"/></svg>
<div class="b" style="left:194px;top:105px;width:1px;height:20px;background:#d4d4d4;"></div>
<svg class="b" style="left:203px;top:107px" width="14" height="14" viewBox="0 0 14 14"><g fill="#6e6e6e"><rect x="0" y="0" width="1" height="1"/><rect x="6" y="0" width="1" height="1"/><rect x="13" y="0" width="1" height="1"/><rect x="0" y="0" width="1" height="1"/><rect x="0" y="6" width="1" height="1"/><rect x="0" y="2" width="1" height="1"/><rect x="6" y="2" width="1" height="1"/><rect x="13" y="2" width="1" height="1"/><rect x="2" y="0" width="1" height="1"/><rect x="2" y="6" width="1" height="1"/><rect x="0" y="4" width="1" height="1"/><rect x="6" y="4" width="1" height="1"/><rect x="13" y="4" width="1" height="1"/><rect x="4" y="0" width="1" height="1"/><rect x="4" y="6" width="1" height="1"/><rect x="0" y="6" width="1" height="1"/><rect x="6" y="6" width="1" height="1"/><rect x="13" y="6" width="1" height="1"/><rect x="6" y="0" width="1" height="1"/><rect x="6" y="6" width="1" height="1"/><rect x="0" y="8" width="1" height="1"/><rect x="6" y="8" width="1" height="1"/><rect x="13" y="8" width="1" height="1"/><rect x="8" y="0" width="1" height="1"/><rect x="8" y="6" width="1" height="1"/><rect x="0" y="10" width="1" height="1"/><rect x="6" y="10" width="1" height="1"/><rect x="13" y="10" width="1" height="1"/><rect x="10" y="0" width="1" height="1"/><rect x="10" y="6" width="1" height="1"/><rect x="0" y="12" width="1" height="1"/><rect x="6" y="12" width="1" height="1"/><rect x="13" y="12" width="1" height="1"/><rect x="12" y="0" width="1" height="1"/><rect x="12" y="6" width="1" height="1"/></g><rect x="0" y="12.500" width="14" height="1.300" fill="#555"/></svg>
<svg class="b" style="left:224.0px;top:113.0px" width="5" height="3" viewBox="0 0 5 3"><path d="M0 0H5L2.5 3Z" fill="#6a6a6a"/></svg>
<div class="b" style="left:237px;top:105px;width:1px;height:20px;background:#d4d4d4;"></div>
<svg class="b" style="left:245px;top:105px" width="17" height="17" viewBox="0 0 17 17"><path d="M3 7.700L8.200 2.500l5.300 5.300-5.300 4.700z" fill="#fff" stroke="#555" stroke-width="1"/><path d="M6.800 4.500V2a1.400 1.400 0 0 1 2.800 0v4" fill="none" stroke="#555" stroke-width="1"/><path d="M13.600 5.500c1.800 1.500 2.800 4 2 6.500-1.600-1-2.400-3.500-2-6.500z" fill="#1e7fc0"/><rect x="0" y="13" width="16" height="4" fill="#ffff00"/></svg>
<svg class="b" style="left:267.0px;top:113.0px" width="5" height="3" viewBox="0 0 5 3"><path d="M0 0H5L2.5 3Z" fill="#6a6a6a"/></svg>
<span class="t" id="t70" style="left:281.7px;top:106.00px;font-size:14px;color:#5e5e5e;">A</span>
<div class="b" style="left:279px;top:118px;width:16px;height:4px;background:#ff0000;"></div>
<svg class="b" style="left:301.0px;top:113.0px" width="5" height="3" viewBox="0 0 5 3"><path d="M0 0H5L2.5 3Z" fill="#6a6a6a"/></svg>
<div class="b" style="left:330px;top:75px;width:14px;height:1px;background:#666;"></div>
<div class="b" style="left:330px;top:78px;width:14px;height:1px;background:#666;"></div>
<div class="b" style="left:330px;top:81px;width:14px;height:1px;background:#666;"></div>
<div class="b" style="left:352px;top:79px;width:14px;height:1px;background:#666;"></div>
<div class="b" style="left:352px;top:82px;width:14px;height:1px;background:#666;"></div>
<div class="b" style="left:352px;top:85px;width:14px;height:1px;background:#666;"></div>
<div class="b" style="left:370px;top:72px;width:22px;height:23px;background:#c6c6c6;"></div>
<div class="b" style="left:374px;top:84px;width:14px;height:1px;background:#666;"></div>
<div class="b" style="left:374px;top:87px;width:14px;height:1px;background:#666;"></div>
<div class="b" style="left:374px;top:90px;width:14px;height:1px;background:#666;"></div>
<svg class="b" style="left:396px;top:72px" width="22" height="22" viewBox="0 0 22 22"><text x="6.800" y="15.200" font-family="Liberation Sans, sans-serif" font-size="9.500" fill="#4a4a4a" transform="rotate(-45 6.800 15.200)">ab</text><path d="M8.300 17.700L18 8M14.300 8.200H18v3.700" fill="none" stroke="#4a4a4a" stroke-width="1.100"/></svg>
<svg class="b" style="left:418.0px;top:82.0px" width="5" height="3" viewBox="0 0 5 3"><path d="M0 0H5L2.5 3Z" fill="#6a6a6a"/></svg>
<div class="b" style="left:443px;top:71px;width:1px;height:55px;background:#d4d4d4;"></div>
<span class="t" id="t71" style="left:452.5px;top:73.75px;font-size:10.5px;color:#3a3a3a;letter-spacing:0.406px;">ab</span>
<span class="t" id="t72" style="left:452.5px;top:80.75px;font-size:10.5px;color:#3a3a3a;letter-spacing:0.250px;">c</span>
<svg class="b" style="left:459px;top:85px" width="6" height="5" viewBox="0 0 6 5"><path d="M5 0v2.500H1.200M2.800 0.500L1 2.500l1.800 2" fill="none" stroke="#1e7fc0" stroke-width="1.100"/></svg>
<div class="b" style="left:330px;top:109px;width:14px;height:1px;background:#666;"></div>
<div class="b" style="left:330px;top:112px;width:10px;height:1px;background:#666;"></div>
<div class="b" style="left:330px;top:115px;width:14px;height:1px;background:#666;"></div>
<div class="b" style="left:330px;top:118px;width:10px;height:1px;background:#666;"></div>
<div class="b" style="left:352.0px;top:109px;width:14px;height:1px;background:#666;"></div>
<div class="b" style="left:354.0px;top:112px;width:10px;height:1px;background:#666;"></div>
<div class="b" style="left:352.0px;top:115px;width:14px;height:1px;background:#666;"></div>
<div class="b" style="left:354.0px;top:118px;width:10px;height:1px;background:#666;"></div>
<div class="b" style="left:374px;top:109px;width:14px;height:1px;background:#666;"></div>
<div class="b" style="left:378px;top:112px;width:10px;height:1px;background:#666;"></div>
<div class="b" style="left:374px;top:115px;width:14px;height:1px;background:#666;"></div>
<div class="b" style="left:378px;top:118px;width:10px;height:1px;background:#666;"></div>
<div class="b" style="left:398px;top:107px;width:16px;height:1px;background:#666;"></div>
<div class="b" style="left:398px;top:119px;width:16px;height:1px;background:#666;"></div>
<div class="b" style="left:406px;top:110px;width:8px;height:1px;background:#666;"></div>
<div class="b" style="left:406px;top:113px;width:8px;height:1px;background:#666;"></div>
<div class="b" style="left:406px;top:116px;width:8px;height:1px;background:#666;"></div>
<svg class="b" style="left:398px;top:109px" width="8" height="9" viewBox="0 0 8 9"><path d="M7.500 4.500H2M4.600 1L1.200 4.500l3.400 3.500" fill="none" stroke="#1e7fc0" stroke-width="1.900"/></svg>
<div class="b" style="left:420px;top:107px;width:16px;height:1px;background:#666;"></div>
<div class="b" style="left:420px;top:119px;width:16px;height:1px;background:#666;"></div>
<div class="b" style="left:428px;top:110px;width:8px;height:1px;background:#666;"></div>
<div class="b" style="left:428px;top:113px;width:8px;height:1px;background:#666;"></div>
<div class="b" style="left:428px;top:116px;width:8px;height:1px;background:#666;"></div>
<svg class="b" style="left:420px;top:109px" width="8" height="9" viewBox="0 0 8 9"><path d="M0.500 4.500H6M3.400 1L6.800 4.500 3.400 8" fill="none" stroke="#1e7fc0" stroke-width="1.900"/></svg>
<svg class="b" style="left:451px;top:106px" width="15" height="15" viewBox="0 0 15 15"><rect x="0.500" y="0.500" width="14" height="14" fill="#fff" stroke="#666"/><path d="M0.500 3.500h14M0.500 11.500h14M7.500 0.500v3M7.500 11.500v3" stroke="#666"/><path d="M3 7.500h9" fill="none" stroke="#1e7fc0" stroke-width="1.200"/><path d="M2 7.500l3-2.300v4.600zM13 7.500l-3-2.300v4.600z" fill="#1e7fc0"/></svg>
<svg class="b" style="left:473.0px;top:113.0px" width="5" height="3" viewBox="0 0 5 3"><path d="M0 0H5L2.5 3Z" fill="#6a6a6a"/></svg>
<div class="b" style="left:499px;top:65px;width:78px;height:22px;background:#fff;border:1px solid #c6c6c6;box-sizing:border-box;"></div>
<span class="t" id="t73" style="left:503px;top:69.75px;font-size:12.5px;color:#444;letter-spacing:-0.328px;">Общий</span>
<svg class="b" style="left:567.0px;top:74.0px" width="5" height="3" viewBox="0 0 5 3"><path d="M0 0H5L2.5 3Z" fill="#6a6a6a"/></svg>
<svg class="b" style="left:501px;top:89px" width="19" height="18" viewBox="0 0 19 18"><rect x="1.750" y="1.750" width="14.500" height="7.800" fill="#fff" stroke="#1e7fc0" stroke-width="1.500"/><path d="M2.500 2.500h2v1.500M15.500 8.800h-2v-1.500" fill="none" stroke="#1e7fc0" stroke-width="1"/><circle cx="9" cy="5.600" r="2.300" fill="#1e7fc0"/><circle cx="9.700" cy="5" r="0.900" fill="#3aa06a"/><g fill="#f5c27a" stroke="#f3f3f3" stroke-width=".7"><ellipse cx="13.600" cy="12.400" rx="3.500" ry="1.500"/><ellipse cx="13.600" cy="10.500" rx="3.500" ry="1.500"/><ellipse cx="13.600" cy="8.600" rx="3.500" ry="1.500"/><ellipse cx="8.700" cy="15.600" rx="3.700" ry="1.500"/><ellipse cx="8.700" cy="13.700" rx="3.700" ry="1.500"/></g></svg>
<svg class="b" style="left:524.0px;top:97.0px" width="5" height="3" viewBox="0 0 5 3"><path d="M0 0H5L2.5 3Z" fill="#6a6a6a"/></svg>
<span class="t" id="t74" style="left:538.5px;top:90.75px;font-size:15.5px;color:#444;transform:scaleX(0.88);transform-origin:left;">%</span>
<span class="t" id="t75" style="left:559px;top:92.50px;font-size:10px;color:#3a3a3a;letter-spacing:-0.729px;">000</span>
<svg class="b" style="left:502px;top:114px" width="16" height="16" viewBox="0 0 16 16"><path d="M7.500 3.500H1.500M4 0.800L1.200 3.500 4 6.200" fill="none" stroke="#1e7fc0" stroke-width="1.500"/><ellipse cx="12.050" cy="3.100" rx="1.500" ry="2.550" fill="none" stroke="#3a3a3a" stroke-width="1.050"/><ellipse cx="7.300" cy="10.400" rx="1.500" ry="2.550" fill="none" stroke="#3a3a3a" stroke-width="1.050"/><ellipse cx="12.050" cy="10.400" rx="1.500" ry="2.550" fill="none" stroke="#3a3a3a" stroke-width="1.050"/><path d="M4.300 12.300L2.700 14.800" stroke="#3a3a3a" stroke-width="1.100"/></svg>
<svg class="b" style="left:524px;top:114px" width="16" height="16" viewBox="0 0 16 16"><path d="M0.500 10.500H6.500M4 7.800L6.800 10.500 4 13.200" fill="none" stroke="#1e7fc0" stroke-width="1.500"/><ellipse cx="6.900" cy="3.100" rx="1.500" ry="2.550" fill="none" stroke="#3a3a3a" stroke-width="1.050"/><ellipse cx="12.150" cy="3.100" rx="1.500" ry="2.550" fill="none" stroke="#3a3a3a" stroke-width="1.050"/><ellipse cx="12.150" cy="10.400" rx="1.500" ry="2.550" fill="none" stroke="#3a3a3a" stroke-width="1.050"/><path d="M3.600 5L2 7.500" stroke="#3a3a3a" stroke-width="1.100"/><path d="M9 12.300L7.400 14.800" stroke="#3a3a3a" stroke-width="1.100"/></svg>
<svg class="b" style="left:596px;top:67px" width="17" height="16" viewBox="0 0 17 16"><rect x="0.500" y="0.500" width="13" height="12" fill="#fff" stroke="#8a8a8a"/><path d="M7.500 0.500v6M10.500 0.500v6M7 4.500h7" stroke="#b0b0b0" fill="none"/><rect x="1" y="1" width="6" height="3" fill="#f05a28"/><rect x="1" y="5" width="9" height="3" fill="#1e7fc0"/><rect x="1" y="9" width="3.500" height="3" fill="#f05a28"/><rect x="6.500" y="7.500" width="9.500" height="8" fill="#fff" stroke="#555"/><path d="M9 10.500h5M9 12.600h5M12.600 9l-2.200 5.300" stroke="#333" stroke-width="1" fill="none"/></svg>
<svg class="b" style="left:596px;top:90px" width="17" height="16" viewBox="0 0 17 16"><rect x="0.500" y="0.500" width="15" height="12" fill="#fff" stroke="#8a8a8a"/><rect x="4.500" y="4.500" width="7" height="5" fill="#a8d4dc"/><path d="M0.500 4.500h15M0.500 8.500h15M4.500 0.500v12M8.500 0.500v12M12.500 0.500v12" stroke="#9a9a9a" fill="none" stroke-width=".9"/><path d="M15.500 2.500l1.500 1.500-6.500 6.500-2-1.800z" fill="#6a6a6a" stroke="#f3f3f3" stroke-width=".5"/><path d="M9 9.500c-2.200-.3-3.500 2-5 5.500 3 .8 6.500-.5 6.800-3.800z" fill="#1e7fc0"/><circle cx="8.800" cy="12" r=".9" fill="#fff"/></svg>
<svg class="b" style="left:596px;top:113px" width="17" height="16" viewBox="0 0 17 16"><rect x="0.500" y="0.500" width="15" height="12" fill="#fff" stroke="#8a8a8a"/><rect x="4.500" y="4.500" width="7" height="5" fill="#c3e0e6"/><path d="M0.500 4.500h15M0.500 8.500h15M4.500 0.500v12M8.500 0.500v12M12.500 0.500v12" stroke="#9a9a9a" fill="none" stroke-width=".9"/><path d="M15.500 2.500l1.500 1.500-6.500 6.500-2-1.800z" fill="#6a6a6a" stroke="#f3f3f3" stroke-width=".5"/><path d="M9 9.500c-2.200-.3-3.500 2-5 5.500 3 .8 6.500-.5 6.800-3.800z" fill="#1e7fc0"/><circle cx="8.800" cy="12" r=".9" fill="#fff"/></svg>
<span class="t" id="t76" style="left:615px;top:70.00px;font-size:12px;color:#262626;letter-spacing:-0.029px;">Условное форматирование</span>
<svg class="b" style="left:770.0px;top:74.0px" width="5" height="3" viewBox="0 0 5 3"><path d="M0 0H5L2.5 3Z" fill="#6a6a6a"/></svg>
<span class="t" id="t77" style="left:615px;top:93.00px;font-size:12px;color:#262626;letter-spacing:-0.026px;">Форматировать как таблицу</span>
<svg class="b" style="left:774.0px;top:97.0px" width="5" height="3" viewBox="0 0 5 3"><path d="M0 0H5L2.5 3Z" fill="#6a6a6a"/></svg>
<span class="t" id="t78" style="left:615px;top:116.00px;font-size:12px;color:#262626;letter-spacing:-0.115px;">Стили ячеек</span>
<svg class="b" style="left:686.0px;top:120.0px" width="5" height="3" viewBox="0 0 5 3"><path d="M0 0H5L2.5 3Z" fill="#6a6a6a"/></svg>
<svg class="b" style="left:804px;top:66px" width="18" height="18" viewBox="0 0 18 18"><path d="M1.500 1.500h8v4h-8zM5.500 1.500v4M1.500 11.500h8v5h-8zM5.500 11.500v5M1.500 14h8" fill="none" stroke="#777"/><rect x="8.500" y="6.500" width="8" height="4" fill="#a8d4dc" stroke="#777"/><path d="M12.500 6.500v4" stroke="#777"/><path d="M7.500 8.500H1.800M4.500 5.800L1.500 8.500l3 2.700" fill="none" stroke="#1e7fc0" stroke-width="1.500"/></svg>
<svg class="b" style="left:804px;top:89px" width="18" height="18" viewBox="0 0 18 18"><path d="M1.500 1.500h8v4h-8zM5.500 1.500v4M1.500 11.500h8v5h-8zM5.500 11.500v5M1.500 14h8" fill="none" stroke="#777"/><rect x="4.500" y="6.500" width="5" height="4" fill="#a8d4dc" stroke="#777"/><path d="M10 4.500l6.500 7.500M16.500 4.500l-6.500 7.500" stroke="#f05a28" stroke-width="1.500"/></svg>
<svg class="b" style="left:804px;top:112px" width="18" height="17" viewBox="0 0 18 17"><path d="M1.500 2.500h13M1.500 0.500v4M14.500 0.500v4M4 0.800L2 2.500 4 4.200M12 0.800l2 1.700-2 1.700" fill="none" stroke="#1e7fc0" stroke-width="1.100"/><rect x="1.500" y="5.500" width="14" height="10" fill="#fff" stroke="#777"/><path d="M1.500 8.500h14M1.500 12.500h14M5 5.500v10M12 5.500v10" stroke="#aaa"/><rect x="5" y="8.500" width="6" height="4" fill="#1e7fc0"/></svg>
<span class="t" id="t79" style="left:824.5px;top:70.00px;font-size:12px;color:#262626;letter-spacing:-0.422px;">Вставить</span>
<svg class="b" style="left:882.0px;top:74.0px" width="5" height="3" viewBox="0 0 5 3"><path d="M0 0H5L2.5 3Z" fill="#6a6a6a"/></svg>
<span class="t" id="t80" style="left:824.5px;top:93.00px;font-size:12px;color:#262626;letter-spacing:-0.333px;">Удалить</span>
<svg class="b" style="left:878.0px;top:97.0px" width="5" height="3" viewBox="0 0 5 3"><path d="M0 0H5L2.5 3Z" fill="#6a6a6a"/></svg>
<span class="t" id="t81" style="left:824.5px;top:116.00px;font-size:12px;color:#262626;letter-spacing:-0.107px;">Формат</span>
<svg class="b" style="left:870.0px;top:120.0px" width="5" height="3" viewBox="0 0 5 3"><path d="M0 0H5L2.5 3Z" fill="#6a6a6a"/></svg>
<svg class="b" style="left:916px;top:67px" width="16" height="15" viewBox="0 0 16 15"><path d="M14 3.300V1H1.800l6.700 6.400L1.800 13.800H14v-2.300" fill="none" stroke="#3a3a3a" stroke-width="1.900"/></svg>
<svg class="b" style="left:938.0px;top:74.0px" width="5" height="3" viewBox="0 0 5 3"><path d="M0 0H5L2.5 3Z" fill="#6a6a6a"/></svg>
<span class="t" id="t82" style="left:952px;top:65.75px;font-size:9.5px;color:#1e7fc0;letter-spacing:-0.344px;">A</span>
<span class="t" id="t83" style="left:952px;top:74.75px;font-size:9.5px;color:#8b3a6b;letter-spacing:-0.875px;">Я</span>
<svg class="b" style="left:960px;top:72px" width="7" height="7" viewBox="0 0 7 7"><path d="M0 0h7L4.300 3.200v3.800h-1.600V3.200z" fill="#666"/></svg>
<svg class="b" style="left:971.0px;top:74.0px" width="5" height="3" viewBox="0 0 5 3"><path d="M0 0H5L2.5 3Z" fill="#6a6a6a"/></svg>
<svg class="b" style="left:917px;top:90px" width="14" height="16" viewBox="0 0 14 16"><rect x="0.500" y="0.500" width="13" height="15" fill="#fff" stroke="#777"/><rect x="0" y="0" width="14" height="3.500" fill="#777"/><path d="M7 5.500v7M3.800 9.300l3.200 3.200 3.200-3.200" fill="none" stroke="#1e7fc0" stroke-width="2"/></svg>
<svg class="b" style="left:936.0px;top:97.0px" width="5" height="3" viewBox="0 0 5 3"><path d="M0 0H5L2.5 3Z" fill="#6a6a6a"/></svg>
<svg class="b" style="left:952px;top:90px" width="15" height="15" viewBox="0 0 15 15"><circle cx="8.500" cy="6.200" r="4.100" fill="none" stroke="#1e7fc0" stroke-width="1.700"/><path d="M5.500 9.300L1 13.500" stroke="#1e7fc0" stroke-width="2.400"/></svg>
<svg class="b" style="left:971.0px;top:97.0px" width="5" height="3" viewBox="0 0 5 3"><path d="M0 0H5L2.5 3Z" fill="#6a6a6a"/></svg>
<svg class="b" style="left:916px;top:113px" width="16" height="16" viewBox="0 0 16 16"><g transform="rotate(-42 7.500 7.500)"><rect x="1" y="4.200" width="13" height="6.600" rx="1.200" fill="#eda36a"/><rect x="0.600" y="4.200" width="1.700" height="6.600" rx=".6" fill="#f6cfae"/><rect x="2.300" y="4" width=".9" height="7" fill="#f3f3f3"/></g></svg>
<svg class="b" style="left:936.0px;top:120.0px" width="5" height="3" viewBox="0 0 5 3"><path d="M0 0H5L2.5 3Z" fill="#6a6a6a"/></svg>
<svg class="b" style="left:1007px;top:141px" width="10" height="8" viewBox="0 0 10 8"><path d="M1.200 6.300l3.600-3.600 3.600 3.600" fill="none" stroke="#666" stroke-width="2"/></svg>
<svg class="b" style="left:125px;top:470px" width="55" height="72" viewBox="0 0 55 72"><path d="M7 66.800L37.800 21.500" stroke="#ff0000" stroke-width="3.600" fill="none"/><path d="M46.700 5.600L25.200 18.300L36.700 21.500L43.500 30.200Z" fill="#ff0000"/></svg>
<div class="b" style="left:398px;top:197px;width:262px;height:56px;background:#fff;border:1px solid #c8c8c8;box-sizing:border-box;box-shadow:0 1px 4px rgba(0,0,0,0.250);"></div>
<div class="b" style="left:402px;top:201px;width:65px;height:24px;background:#fff;border:1px solid #c0c0c0;box-sizing:border-box;"></div>
<div class="b" style="left:466px;top:201px;width:46px;height:24px;background:#fff;border:1px solid #c0c0c0;box-sizing:border-box;"></div>
<span class="t" id="t84" style="left:405.5px;top:205.75px;font-size:12.5px;color:#444;letter-spacing:-0.277px;">Calibri</span>
<span class="t" id="t85" style="left:468.7px;top:205.75px;font-size:12.5px;color:#444;">11</span>
<svg class="b" style="left:456.0px;top:211.0px" width="5" height="3" viewBox="0 0 5 3"><path d="M0 0H5L2.5 3Z" fill="#6a6a6a"/></svg>
<svg class="b" style="left:502.0px;top:211.0px" width="5" height="3" viewBox="0 0 5 3"><path d="M0 0H5L2.5 3Z" fill="#6a6a6a"/></svg>
<span class="t" id="t86" style="left:518px;top:206.75px;font-size:14.5px;color:#5e5e5e;">A</span>
<svg class="b" style="left:527px;top:205px" width="5" height="3" viewBox="0 0 5 3"><path d="M0 3h5L2.500 0z" fill="#1e7fc0"/></svg>
<span class="t" id="t87" style="left:541px;top:209.00px;font-size:12px;color:#5e5e5e;">A</span>
<svg class="b" style="left:548px;top:205px" width="5" height="3" viewBox="0 0 5 3"><path d="M0 0h5L2.500 3z" fill="#1e7fc0"/></svg>
<svg class="b" style="left:558px;top:204px" width="19" height="18" viewBox="0 0 19 18"><rect x="1.750" y="1.750" width="14.500" height="7.800" fill="#fff" stroke="#1e7fc0" stroke-width="1.500"/><path d="M2.500 2.500h2v1.500M15.500 8.800h-2v-1.500" fill="none" stroke="#1e7fc0" stroke-width="1"/><circle cx="9" cy="5.600" r="2.300" fill="#1e7fc0"/><circle cx="9.700" cy="5" r="0.900" fill="#3aa06a"/><g fill="#f5c27a" stroke="#fff" stroke-width=".7"><ellipse cx="13.600" cy="12.400" rx="3.500" ry="1.500"/><ellipse cx="13.600" cy="10.500" rx="3.500" ry="1.500"/><ellipse cx="13.600" cy="8.600" rx="3.500" ry="1.500"/><ellipse cx="8.700" cy="15.600" rx="3.700" ry="1.500"/><ellipse cx="8.700" cy="13.700" rx="3.700" ry="1.500"/></g></svg>
<svg class="b" style="left:581.0px;top:211.0px" width="5" height="3" viewBox="0 0 5 3"><path d="M0 0H5L2.5 3Z" fill="#6a6a6a"/></svg>
<span class="t" id="t88" style="left:595.5px;top:205.75px;font-size:15.5px;color:#444;transform:scaleX(0.88);transform-origin:left;">%</span>
<span class="t" id="t89" style="left:616px;top:207.50px;font-size:10px;color:#3a3a3a;letter-spacing:-0.729px;">000</span>
<svg class="b" style="left:637px;top:205px" width="15" height="15" viewBox="0 0 15 15"><rect x="0.500" y="0.500" width="14" height="14" fill="#fff" stroke="#666"/><path d="M0.500 3.500h14M0.500 11.500h14M7.500 0.500v3M7.500 11.500v3" stroke="#666"/><path d="M3 7.500h9" fill="none" stroke="#1e7fc0" stroke-width="1.200"/><path d="M2 7.500l3-2.300v4.600zM13 7.500l-3-2.300v4.600z" fill="#1e7fc0"/></svg>
<span class="t" id="t90" style="left:407px;top:229.00px;font-size:14px;color:#333;font-weight:bold;letter-spacing:-0.156px;">Ж</span>
<span class="t" id="t91" style="left:430.5px;top:229.00px;font-size:14px;color:#333;font-weight:bold;font-style:italic;letter-spacing:-0.609px;">К</span>
<div class="b" style="left:450.0px;top:232px;width:14px;height:1px;background:#666;"></div>
<div class="b" style="left:452.0px;top:235px;width:10px;height:1px;background:#666;"></div>
<div class="b" style="left:450.0px;top:238px;width:14px;height:1px;background:#666;"></div>
<div class="b" style="left:452.0px;top:241px;width:10px;height:1px;background:#666;"></div>
<svg class="b" style="left:471px;top:228px" width="17" height="17" viewBox="0 0 17 17"><path d="M3 7.700L8.200 2.500l5.300 5.300-5.300 4.700z" fill="#fff" stroke="#555" stroke-width="1"/><path d="M6.800 4.500V2a1.400 1.400 0 0 1 2.800 0v4" fill="none" stroke="#555" stroke-width="1"/><path d="M13.600 5.500c1.800 1.500 2.800 4 2 6.500-1.600-1-2.400-3.500-2-6.500z" fill="#1e7fc0"/><rect x="0" y="13" width="16" height="4" fill="#ffff00"/></svg>
<svg class="b" style="left:493.0px;top:235.0px" width="5" height="3" viewBox="0 0 5 3"><path d="M0 0H5L2.5 3Z" fill="#6a6a6a"/></svg>
<span class="t" id="t92" style="left:507.7px;top:229.00px;font-size:14px;color:#5e5e5e;">A</span>
<div class="b" style="left:505px;top:241px;width:16px;height:4px;background:#ff0000;"></div>
<svg class="b" style="left:527.0px;top:235.0px" width="5" height="3" viewBox="0 0 5 3"><path d="M0 0H5L2.5 3Z" fill="#6a6a6a"/></svg>
<svg class="b" style="left:540px;top:230px" width="14" height="14" viewBox="0 0 14 14"><g fill="#6e6e6e"><rect x="0" y="0" width="1" height="1"/><rect x="6" y="0" width="1" height="1"/><rect x="13" y="0" width="1" height="1"/><rect x="0" y="0" width="1" height="1"/><rect x="0" y="6" width="1" height="1"/><rect x="0" y="2" width="1" height="1"/><rect x="6" y="2" width="1" height="1"/><rect x="13" y="2" width="1" height="1"/><rect x="2" y="0" width="1" height="1"/><rect x="2" y="6" width="1" height="1"/><rect x="0" y="4" width="1" height="1"/><rect x="6" y="4" width="1" height="1"/><rect x="13" y="4" width="1" height="1"/><rect x="4" y="0" width="1" height="1"/><rect x="4" y="6" width="1" height="1"/><rect x="0" y="6" width="1" height="1"/><rect x="6" y="6" width="1" height="1"/><rect x="13" y="6" width="1" height="1"/><rect x="6" y="0" width="1" height="1"/><rect x="6" y="6" width="1" height="1"/><rect x="0" y="8" width="1" height="1"/><rect x="6" y="8" width="1" height="1"/><rect x="13" y="8" width="1" height="1"/><rect x="8" y="0" width="1" height="1"/><rect x="8" y="6" width="1" height="1"/><rect x="0" y="10" width="1" height="1"/><rect x="6" y="10" width="1" height="1"/><rect x="13" y="10" width="1" height="1"/><rect x="10" y="0" width="1" height="1"/><rect x="10" y="6" width="1" height="1"/><rect x="0" y="12" width="1" height="1"/><rect x="6" y="12" width="1" height="1"/><rect x="13" y="12" width="1" height="1"/><rect x="12" y="0" width="1" height="1"/><rect x="12" y="6" width="1" height="1"/></g><rect x="0" y="12.500" width="14" height="1.300" fill="#555"/></svg>
<svg class="b" style="left:561.0px;top:235.0px" width="5" height="3" viewBox="0 0 5 3"><path d="M0 0H5L2.5 3Z" fill="#6a6a6a"/></svg>
<svg class="b" style="left:573.5px;top:230px" width="16" height="16" viewBox="0 0 16 16"><path d="M7.500 3.500H1.500M4 0.800L1.200 3.500 4 6.200" fill="none" stroke="#1e7fc0" stroke-width="1.500"/><ellipse cx="12.050" cy="3.100" rx="1.500" ry="2.550" fill="none" stroke="#3a3a3a" stroke-width="1.050"/><ellipse cx="7.300" cy="10.400" rx="1.500" ry="2.550" fill="none" stroke="#3a3a3a" stroke-width="1.050"/><ellipse cx="12.050" cy="10.400" rx="1.500" ry="2.550" fill="none" stroke="#3a3a3a" stroke-width="1.050"/><path d="M4.300 12.300L2.700 14.800" stroke="#3a3a3a" stroke-width="1.100"/></svg>
<svg class="b" style="left:595px;top:230px" width="16" height="16" viewBox="0 0 16 16"><path d="M0.500 10.500H6.500M4 7.800L6.800 10.500 4 13.200" fill="none" stroke="#1e7fc0" stroke-width="1.500"/><ellipse cx="6.900" cy="3.100" rx="1.500" ry="2.550" fill="none" stroke="#3a3a3a" stroke-width="1.050"/><ellipse cx="12.150" cy="3.100" rx="1.500" ry="2.550" fill="none" stroke="#3a3a3a" stroke-width="1.050"/><ellipse cx="12.150" cy="10.400" rx="1.500" ry="2.550" fill="none" stroke="#3a3a3a" stroke-width="1.050"/><path d="M3.600 5L2 7.500" stroke="#3a3a3a" stroke-width="1.100"/><path d="M9 12.300L7.400 14.800" stroke="#3a3a3a" stroke-width="1.100"/></svg>
<svg class="b" style="left:617px;top:229px" width="17" height="15" viewBox="0 0 17 15"><path d="M13 0.500l3 3-3.500 3.500-3-3z" fill="#666"/><path d="M8.500 4l4 4-2 2-4-4z" fill="#666"/><path d="M6 6.500l4.500 4.500L6 14.500 0.500 8z" fill="#f5c27a"/></svg>
<div class="b" style="left:398px;top:268px;width:278px;height:426px;background:#fff;border:1px solid #c4c4c4;box-sizing:border-box;box-shadow:1px 2px 4px rgba(0,0,0,0.220);"></div>
<span class="t" id="t93" style="left:432.5px;top:276.00px;font-size:12px;color:#3b3b3b;letter-spacing:-0.361px;">В<u>ы</u>резать</span>
<span class="t" id="t94" style="left:432.5px;top:300.00px;font-size:12px;color:#3b3b3b;letter-spacing:-0.013px;"><u>К</u>опировать</span>
<div class="b" style="left:424px;top:319px;width:250px;height:21px;background:#e8e8e8;"></div>
<span class="t" id="t95" style="left:432.5px;top:323.00px;font-size:12px;color:#444;font-weight:bold;letter-spacing:-0.197px;">Параметры вставки:</span>
<span class="t" id="t96" style="left:432.5px;top:376.00px;font-size:12px;color:#3b3b3b;letter-spacing:-0.266px;">Специальная <u>в</u>ставка...</span>
<div class="b" style="left:432px;top:394px;width:242px;height:1px;background:#e1e1e1;"></div>
<span class="t" id="t97" style="left:432.5px;top:402.00px;font-size:12px;color:#3b3b3b;letter-spacing:0.032px;"><u>И</u>нтеллектуальный поиск</span>
<div class="b" style="left:432px;top:420px;width:242px;height:1px;background:#e1e1e1;"></div>
<span class="t" id="t98" style="left:432.5px;top:428.00px;font-size:12px;color:#3b3b3b;letter-spacing:-0.443px;">Встав<u>и</u>ть...</span>
<span class="t" id="t99" style="left:432.5px;top:452.00px;font-size:12px;color:#3b3b3b;letter-spacing:-0.333px;"><u>У</u>далить...</span>
<span class="t" id="t100" style="left:432.5px;top:476.00px;font-size:12px;color:#3b3b3b;letter-spacing:-0.016px;">Очистить содер<u>ж</u>имое</span>
<div class="b" style="left:432px;top:494px;width:242px;height:1px;background:#e1e1e1;"></div>
<span class="t" id="t101" style="left:432.5px;top:502.00px;font-size:12px;color:#a9bcc4;letter-spacing:-0.103px;">Экспресс-анали<u>з</u></span>
<span class="t" id="t102" style="left:432.5px;top:526.00px;font-size:12px;color:#3b3b3b;letter-spacing:0.029px;"><u>Ф</u>ильтр</span>
<span class="t" id="t103" style="left:432.5px;top:550.00px;font-size:12px;color:#3b3b3b;letter-spacing:-0.037px;"><u>С</u>ортировка</span>
<svg class="b" style="left:661px;top:528px" width="4" height="7" viewBox="0 0 4 7"><path d="M0 0v7L4 3.500z" fill="#666670"/></svg>
<svg class="b" style="left:661px;top:552px" width="4" height="7" viewBox="0 0 4 7"><path d="M0 0v7L4 3.500z" fill="#666670"/></svg>
<div class="b" style="left:432px;top:568px;width:242px;height:1px;background:#e1e1e1;"></div>
<span class="t" id="t104" style="left:432.5px;top:576.00px;font-size:12px;color:#3b3b3b;letter-spacing:-0.082px;">Вставить приме<u>ч</u>ание</span>
<div class="b" style="left:397px;top:594px;width:278px;height:29px;background:#c6c6c6;border:3px solid #ff0000;box-sizing:border-box;border-radius:9px;"></div>
<span class="t" id="t105" style="left:432.5px;top:602.00px;font-size:12px;color:#222;letter-spacing:-0.155px;">Формат <u>я</u>чеек...</span>
<span class="t" id="t106" style="left:432.5px;top:626.00px;font-size:12px;color:#3b3b3b;letter-spacing:-0.040px;">Вы<u>б</u>рать из раскрывающегося списка...</span>
<span class="t" id="t107" style="left:432.5px;top:650.00px;font-size:12px;color:#3b3b3b;letter-spacing:-0.012px;">Присвоит<u>ь</u> имя...</span>
<span class="t" id="t108" style="left:432.5px;top:673.00px;font-size:12px;color:#3b3b3b;letter-spacing:-0.167px;">Сс<u>ы</u>лка</span>
<svg class="b" style="left:404px;top:274px" width="16" height="16" viewBox="0 0 16 16"><path d="M4.300 0.500L10.600 10M11.200 0.500L4.900 10" stroke="#4d4d4d" stroke-width="1.700" fill="none"/><circle cx="3.300" cy="11.700" r="2.300" fill="none" stroke="#1e7fc0" stroke-width="1.100"/><circle cx="12.200" cy="11.700" r="2.300" fill="none" stroke="#1e7fc0" stroke-width="1.100"/></svg>
<svg class="b" style="left:404px;top:299px" width="16" height="14" viewBox="0 0 16 14"><path d="M0.500 0.500h5l2.500 2.500v7h-7.500z" fill="#fff" stroke="#666"/><path d="M6.500 3.500h5l3 3v7h-8z" fill="#fff" stroke="#666"/><path d="M2 3.500h3M2 5.500h3M2 7.500h3M8.500 8.500h4M8.500 10.500h4M8.500 6.500h2" stroke="#1e7fc0" stroke-width="1"/></svg>
<svg class="b" style="left:405px;top:320px" width="16" height="18" viewBox="0 0 16 18"><rect x="0.500" y="3" width="11.500" height="13" rx="1" fill="#f5c27a"/><rect x="3" y="2" width="6.500" height="3" fill="#737373"/><rect x="4.800" y="0.500" width="3" height="2.500" fill="#737373"/><path d="M7.500 8.500h4.500l3 3v5.500h-7.500z" fill="#fff" stroke="#737373"/><path d="M12 8.500v3h3" fill="none" stroke="#737373"/></svg>
<svg class="b" style="left:429px;top:343px" width="23" height="24" viewBox="0 0 23 24"><rect x="1" y="4" width="18" height="19" rx="1" fill="#fdf2e2"/><path d="M2.500 5v16.500h10" fill="none" stroke="#f5b566" stroke-width="3"/><path d="M1 5.200h4M15 5.200h4.500v9" fill="none" stroke="#f5b566" stroke-width="2.400"/><rect x="5" y="2.500" width="10" height="3.500" fill="#555"/><rect x="8" y="0.500" width="4" height="3" rx="1" fill="#555"/><rect x="11" y="11" width="12" height="13" fill="#fff"/></svg>
<span class="t" id="t109" style="left:441px;top:353.75px;font-size:14.5px;color:#333;letter-spacing:0.328px;">A</span>
<svg class="b" style="left:403px;top:399px" width="18" height="18" viewBox="0 0 18 18"><circle cx="11" cy="7" r="5.400" fill="#fff" stroke="#1e7fc0" stroke-width="1.700"/><path d="M7 11.200L1.500 16.700" stroke="#1e7fc0" stroke-width="2.300"/><path d="M11 6.300v4" stroke="#333" stroke-width="1.700"/><circle cx="11" cy="4.200" r="1.100" fill="#333"/></svg>
<svg class="b" style="left:403px;top:500px" width="17" height="16" viewBox="0 0 17 16"><rect x="2.500" y="1.500" width="13" height="13" fill="#f4f4f4" stroke="#a8a8a8"/><path d="M6 4.500h8M5 7.500h8M5 10.500h6" stroke="#b4b4b4" stroke-width="1.700"/><path d="M6 0L1.500 6.500h2.800L2.500 12l5.500-7H5z" fill="#dcdcdc" stroke="#fff" stroke-width=".6"/></svg>
<svg class="b" style="left:403px;top:574px" width="17" height="16" viewBox="0 0 17 16"><path d="M8 1.500h6.500a1 1 0 0 1 1 1v7a1 1 0 0 1-1 1H9.500L5.500 14.300V10.500H3.500a1 1 0 0 1-1-1V7" fill="#fff" stroke="#555" stroke-width="1"/><path d="M3.800 0.300v6M0.800 3.300h6" stroke="#0f8050" stroke-width="1.900"/></svg>
<svg class="b" style="left:405px;top:600px" width="15" height="16" viewBox="0 0 15 16"><rect x="0.500" y="0.500" width="13" height="15" fill="#fff" stroke="#555"/><rect x="0" y="0" width="14" height="3" fill="#1e7fc0"/><circle cx="4.200" cy="6.800" r="1.300" fill="#555"/><circle cx="4.200" cy="11.500" r="1.200" fill="none" stroke="#555" stroke-width=".9"/><path d="M7 6.800h4.500M7 11.500h4.500" stroke="#555"/></svg>
<svg class="b" style="left:403px;top:671px" width="18" height="18" viewBox="0 0 18 18"><path d="M1.700 9.800A6 6 0 1 1 12.500 9.800z" fill="#fff" stroke="#555" stroke-width="1"/><path d="M1.500 5h11.200M1.300 8.300h11.600M7.100 1.200c-3.200 2-3.200 6-2.600 8.600M7.100 1.200c3.200 2 3.200 6 2.600 8.600" fill="none" stroke="#555" stroke-width=".9"/><rect x="2.200" y="10.800" width="8" height="5.600" rx="2.800" fill="#fff" stroke="#1e7fc0" stroke-width="1.800"/><rect x="8.800" y="10.800" width="8" height="5.600" rx="2.800" fill="none" stroke="#1e7fc0" stroke-width="1.800"/><path d="M6.500 15.200l5-3.300" stroke="#1e7fc0" stroke-width="1.600"/></svg>
</body></html>
